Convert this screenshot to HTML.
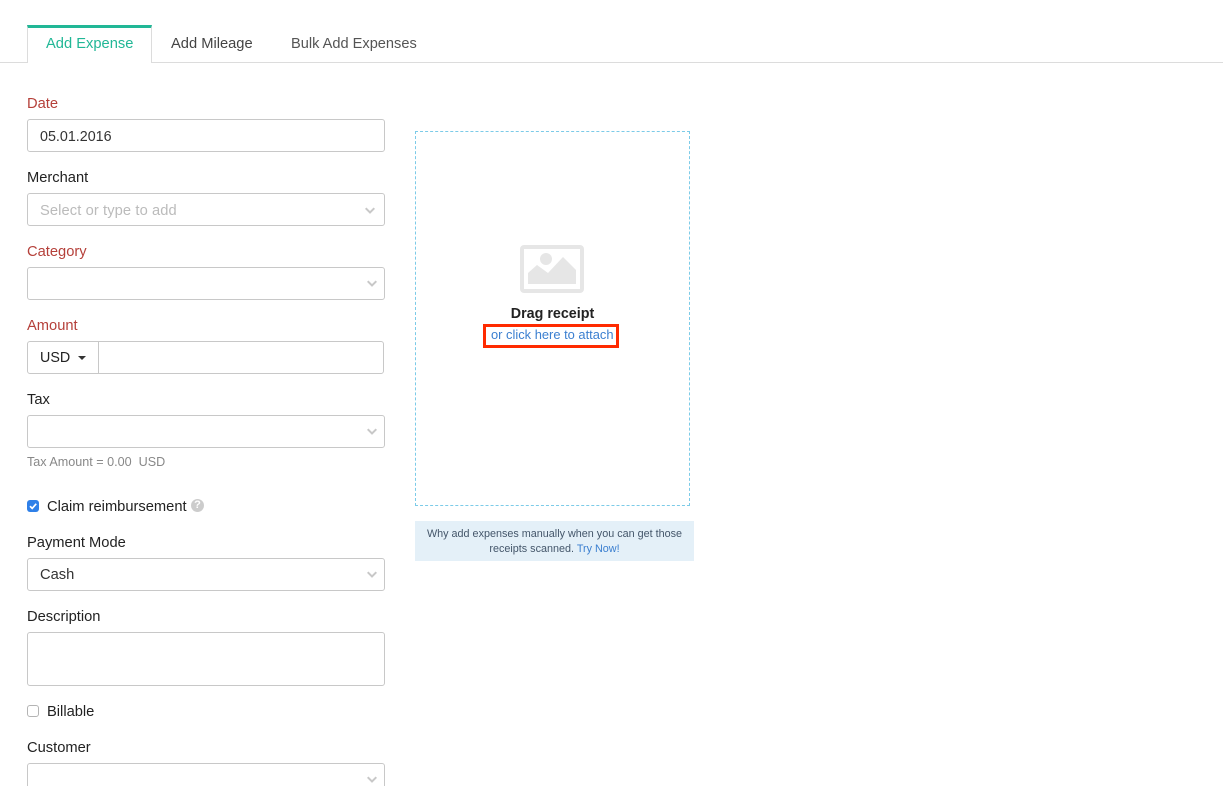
<!DOCTYPE html>
<html>
<head>
<meta charset="utf-8">
<style>
html,body{margin:0;padding:0;background:#fff;overflow:hidden;width:1223px;height:786px;}
#p{width:1223px;height:786px;overflow:hidden;position:relative;font-family:"Liberation Sans",sans-serif;font-size:14.7px;color:#222;}
.a{position:absolute;white-space:nowrap;line-height:22px;}
.a.s{line-height:18px;}
.l{left:27px;}
.r{color:#b5403a;}
.box{position:absolute;left:27px;width:356px;height:31px;border:1px solid #c8c8c8;border-radius:3px;background:#fff;}
.chev{position:absolute;left:367px;}
</style>
</head>
<body>
<div id="p">
<div style="position:absolute;left:0;top:62px;width:1223px;height:1px;background:#dcdcdc"></div>
<div style="position:absolute;left:27px;top:25px;width:123px;height:35px;border-top:3px solid #21b796;border-left:1px solid #dcdcdc;border-right:1px solid #dcdcdc;background:#fff"></div>
<div style="position:absolute;left:28px;top:62px;width:123px;height:1px;background:#fff"></div>
<div class="a" style="left:46px;top:33px;color:#21b796">Add Expense</div>
<div class="a" style="left:171px;top:33px;color:#444">Add Mileage</div>
<div class="a" style="left:291px;top:33px;color:#555;font-size:14.6px">Bulk Add Expenses</div>

<div class="a l r" style="top:93px">Date</div>
<div class="box" style="top:119px"></div>
<div class="a" style="left:40px;top:126px;font-size:14.3px;color:#333">05.01.2016</div>

<div class="a l" style="top:167px">Merchant</div>
<div class="box" style="top:193px"></div>
<div class="a" style="left:40px;top:200px;color:#bbb;letter-spacing:.1px">Select or type to add</div>
<svg class="chev" style="left:365px;top:207px" width="10" height="8"><path d="M.7 1.2L5 5.5L9.3 1.2" fill="none" stroke="#c8c8c8" stroke-width="2"/></svg>

<div class="a l r" style="top:241px">Category</div>
<div class="box" style="top:267px"></div>
<svg class="chev" style="top:280px" width="10" height="8"><path d="M.7 1.2L5 5.5L9.3 1.2" fill="none" stroke="#c8c8c8" stroke-width="2"/></svg>

<div class="a l r" style="top:315px">Amount</div>
<div style="position:absolute;left:27px;top:341px;width:355px;height:31px;border:1px solid #c8c8c8;border-radius:3px"></div>
<div style="position:absolute;left:98px;top:341px;width:1px;height:33px;background:#c8c8c8"></div>
<div class="a" style="left:40px;top:347px;font-size:14.3px">USD</div>
<div style="position:absolute;left:78px;top:356px;width:0;height:0;border-left:4px solid transparent;border-right:4px solid transparent;border-top:4px solid #333"></div>

<div class="a l" style="top:389px">Tax</div>
<div class="box" style="top:415px"></div>
<svg class="chev" style="top:428px" width="10" height="8"><path d="M.7 1.2L5 5.5L9.3 1.2" fill="none" stroke="#c8c8c8" stroke-width="2"/></svg>
<div class="a s" style="left:27px;top:453px;font-size:12.6px;color:#888;white-space:pre">Tax Amount = 0.00  USD</div>

<div style="position:absolute;left:27px;top:500px;width:12px;height:12px;background:#2f80e8;border-radius:3px"></div>
<svg style="position:absolute;left:27px;top:500px" width="12" height="12"><path d="M3 6.2L5.2 8.4L9.2 3.8" fill="none" stroke="#fff" stroke-width="1.7"/></svg>
<div class="a" style="left:47px;top:496px">Claim reimbursement</div>
<div style="position:absolute;left:191px;top:499px;width:13px;height:13px;border-radius:50%;background:#ccc;color:#fff;font-size:11px;font-weight:bold;line-height:13px;text-align:center">?</div>

<div class="a l" style="top:532px">Payment Mode</div>
<div class="box" style="top:558px"></div>
<div class="a" style="left:40px;top:564px;color:#333">Cash</div>
<svg class="chev" style="top:571px" width="10" height="8"><path d="M.7 1.2L5 5.5L9.3 1.2" fill="none" stroke="#c8c8c8" stroke-width="2"/></svg>

<div class="a l" style="top:606px">Description</div>
<div class="box" style="top:632px;height:52px"></div>

<div style="position:absolute;left:27px;top:705px;width:10px;height:10px;border:1px solid #b4b4b4;border-radius:3px"></div>
<div class="a" style="left:47px;top:701px">Billable</div>

<div class="a l" style="top:737px">Customer</div>
<div class="box" style="top:763px"></div>
<svg class="chev" style="top:776px" width="10" height="8"><path d="M.7 1.2L5 5.5L9.3 1.2" fill="none" stroke="#c8c8c8" stroke-width="2"/></svg>

<div style="position:absolute;left:415px;top:131px;width:273px;height:373px;border:1px dashed #7ccbe8"></div>
<svg style="position:absolute;left:520px;top:245px" width="64" height="48">
<rect x="2" y="2" width="60" height="44" rx="2" fill="none" stroke="#e6e6e6" stroke-width="4"/>
<circle cx="26" cy="14" r="6" fill="#e6e6e6"/>
<path d="M8 28L17 20L28 28L43 12L56 25V39H8Z" fill="#e6e6e6"/>
</svg>
<div class="a" style="left:415px;width:275px;text-align:center;top:303px;font-weight:bold;font-size:14.3px;color:#222">Drag receipt</div>
<div style="position:absolute;left:483px;top:324px;width:130px;height:18px;border:3px solid #ff2a00"></div>
<div class="a s" style="left:491px;top:326px;font-size:12.9px;color:#3b7fd0">or click here to attach</div>

<div style="position:absolute;left:415px;top:521px;width:279px;height:40px;background:#e4f0f8"></div>
<div class="a s" style="left:415px;width:279px;text-align:center;top:527px;font-size:10.8px;line-height:15px;color:#44566a;white-space:normal">Why add expenses manually when you can get those<br>receipts scanned. <span style="color:#3b7fd0">Try Now!</span></div>
</div>
</body>
</html>
